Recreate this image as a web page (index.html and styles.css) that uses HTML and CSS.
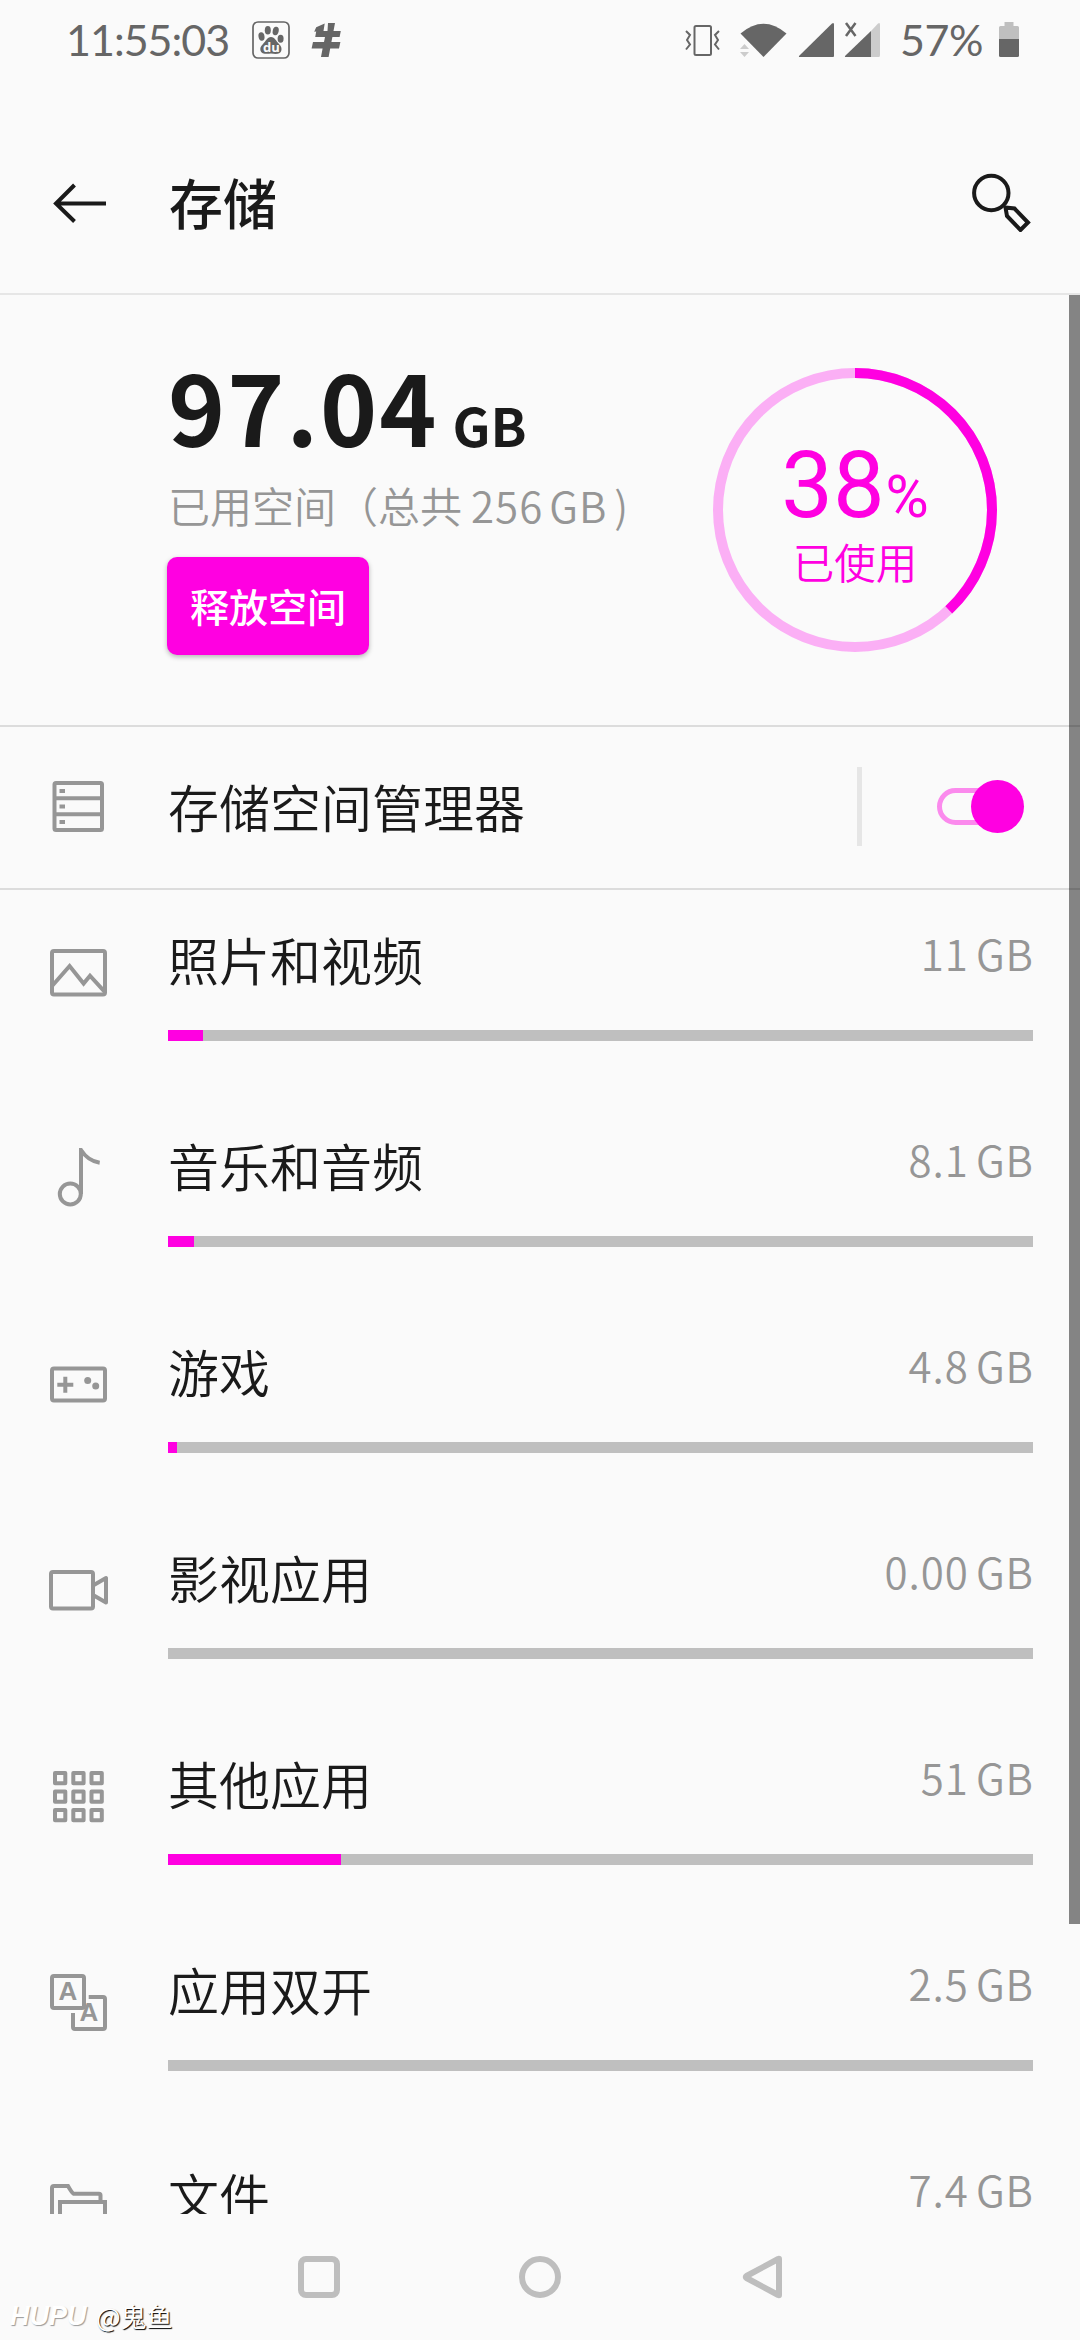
FILE: index.html
```html
<!DOCTYPE html>
<html lang="zh-CN">
<head>
<meta charset="utf-8">
<title>存储</title>
<link rel="stylesheet" href="styles.css">
</head>
<body>
<div class="screen">
  <header class="status">
    <span class="clock">11:55:03</span>
    <svg class="status-notes" width="96" height="80" viewBox="248 0 96 80">
      <rect x="253" y="22" width="36" height="36" rx="5" fill="none" stroke="#666" stroke-width="1.7"/>
      <g fill="#666">
        <ellipse cx="261.5" cy="36.5" rx="3" ry="4.2" transform="rotate(-10 261.5 36.5)"/>
        <ellipse cx="267.8" cy="30.3" rx="3" ry="4.3"/>
        <ellipse cx="275.7" cy="31" rx="3" ry="4.3" transform="rotate(12 275.7 31)"/>
        <ellipse cx="280.6" cy="38.8" rx="3" ry="4"/>
        <path d="M271 37c4 0 5 4 8 7 2.500 2.500 3 4.500 2.200 7-1 3-4 3.300-10.200 2.600-6 .7-9.500 0-10.400-2.600-.8-2.600 0-4.800 2.400-7 3-3 4-7 8-7z"/>
        <path d="M328 23h7l-1.500 8h7.300l-1.200 6h-7.200l-1 5h9l-1.400 6.500h-8.800l-1.600 8.500h-7.600l1.600-8.500h-11l1.400-6.500h11l1-5h-9.800l1-5.500-2 .2 2-4.500 8.500-3.700-1.200 7.500h4z"/>
      </g>
      <text class="du" x="263" y="51.500">du</text>
    </svg>
    <svg class="status-signal" width="216" height="80" viewBox="680 0 216 80">
      <g fill="none" stroke="#666" stroke-width="2">
        <rect x="694.500" y="26" width="16.500" height="29" rx="1.500"/>
        <path d="M686 31l4 4-3 5 3 4.500-4 5M719 31l-4 4 3 5-3 4.500 4 5"/>
      </g>
      <path d="M740.500 33.500Q763.500 14 786.500 33.500L763.500 57z" fill="#666"/>
      <path d="M740 49l4.500-5 4.500 5zM740 52h9l-4.500 5z" fill="#ccc"/>
      <path d="M832 23.500q2-1.500 2 1V56q0 1-1 1h-33q-2 0-.5-1.500z" fill="#666"/>
      <path d="M878 23.500q2-1.500 2 1V55q0 2-1 2h-8V31z" fill="#ccc"/>
      <path d="M871 31v26h-25q-2 0-.5-1.500z" fill="#666"/>
      <path d="M846 23l9.500 13M855.500 23l-9.500 13" stroke="#666" stroke-width="2.500"/>
    </svg>
    <span class="battery-text">57%</span>
    <svg class="status-battery" width="20" height="80" viewBox="995 0 20 80">
      <path d="M1000.500 22h9v4h4q1.500 0 1.500 1.500V39h-20V27.500q0-1.500 1.500-1.500h4z" fill="#bfbfbf"/>
      <path d="M995 39h20v16.500q0 1.500-1.500 1.500h-17q-1.500 0-1.500-1.500z" fill="#666"/>
    </svg>
  </header>

  <div class="appbar">
    <svg class="back" width="60" height="60" viewBox="48 172 60 60" fill="none" stroke="#1a1a1a" stroke-width="4"><path d="M74.500 185L56 203.500l18.500 18M56 203.500h50"/></svg>
    <h1 class="title">存储</h1>
    <svg class="search" width="62" height="62" viewBox="970 170 62 62" fill="none" stroke="#1a1a1a" stroke-width="4"><circle cx="991.300" cy="193" r="17.200"/><path d="M1005.500 207.500l9 1 13.500 14-7.500 7.500-13.500-14z"/></svg>
  </div>

  <main class="content">
    <section class="summary">
      <div class="usage">
        <div class="amount"><span class="number">97.04</span><span class="unit">GB</span></div>
        <div class="caption">已用空间（总共<span class="total">256</span><span class="gb">GB</span><span class="paren">)</span></div>
        <button class="free">释放空间</button>
      </div>
      <div class="ring">
        <svg class="ring-art" width="284" height="284" viewBox="0 0 284 284" fill="none" stroke-width="10">
          <circle cx="142" cy="142" r="137" stroke="#fbaff5"/>
          <circle cx="142" cy="142" r="137" stroke="#ff00e1" pathLength="100" stroke-dasharray="38 62" transform="rotate(-90 142 142)"/>
        </svg>
        <div class="percent">38<small>%</small></div>
        <div class="used">已使用</div>
      </div>
    </section>

    <section class="manager">
      <svg class="icon" width="60" height="60" viewBox="48 777 60 60"><rect x="54.500" y="783" width="47.500" height="47" rx="1.500"/><path d="M54 798.300h48M54 814.300h48"/><path class="solid" d="M59.500 789h5.500v4h-5.500zM59.500 804.500h5.500v4h-5.500zM59.500 820h5.500v4h-5.500z"/></svg>
      <span class="label">存储空间管理器</span>
      <span class="split"></span>
      <span class="toggle"><i class="knob"></i></span>
    </section>

    <section class="list">
      <div class="row">
        <svg class="icon" width="60" height="60" viewBox="0 0 60 60"><rect x="4" y="9" width="53" height="43.500" rx="2"/><path d="M4.500 43.500L21.600 24l14 17.500L42 33.700l15 16.500"/></svg>
        <span class="label">照片和视频</span><span class="size">11<b>GB</b></span>
        <div class="bar"><div class="fill" style="width:35px"></div></div>
      </div>
      <div class="row">
        <svg class="icon" width="60" height="60" viewBox="0 0 60 60"><circle cx="22.300" cy="46" r="10.500"/><path d="M33 46V2q7 11 18.700 12.700"/></svg>
        <span class="label">音乐和音频</span><span class="size">8.1<b>GB</b></span>
        <div class="bar"><div class="fill" style="width:26px"></div></div>
      </div>
      <div class="row">
        <svg class="icon" width="60" height="60" viewBox="0 0 60 60"><rect x="4" y="14.500" width="53" height="32" rx="2"/><path d="M9.300 30.700h16M17.300 22.700v16"/><circle class="solid" cx="39.700" cy="26.500" r="3.500"/><circle class="solid" cx="47.700" cy="32" r="3.500"/></svg>
        <span class="label">游戏</span><span class="size">4.8<b>GB</b></span>
        <div class="bar"><div class="fill" style="width:9px"></div></div>
      </div>
      <div class="row">
        <svg class="icon" width="60" height="60" viewBox="0 0 60 60"><rect x="3" y="12" width="42" height="36.500" rx="2"/><path d="M45 25.500L58 18v24.500L45 35" stroke-linejoin="round"/></svg>
        <span class="label">影视应用</span><span class="size">0.00<b>GB</b></span>
        <div class="bar"></div>
      </div>
      <div class="row">
        <svg class="icon" width="60" height="60" viewBox="0 0 60 60" stroke-linejoin="round"><path d="M7 7h10.300v10.300H7zM25.300 7h10.300v10.300H25.300zM43.500 7h10.300v10.300H43.500zM7 25.500h10.300v10.300H7zM25.300 25.500h10.300v10.300H25.300zM43.500 25.500h10.300v10.300H43.500zM7 44h10.300v10.300H7zM25.300 44h10.300v10.300H25.300zM43.500 44h10.300v10.300H43.500z"/></svg>
        <span class="label">其他应用</span><span class="size">51<b>GB</b></span>
        <div class="bar"><div class="fill" style="width:173px"></div></div>
      </div>
      <div class="row">
        <svg class="icon" width="60" height="60" viewBox="0 0 60 60"><rect x="4" y="4" width="32" height="32" rx="2"/><path d="M40.700 25H55q2 0 2 2v28q0 2-2 2H27q-2 0-2-2V41"/><text x="20" y="28">A</text><text x="41" y="49">A</text></svg>
        <span class="label">应用双开</span><span class="size">2.5<b>GB</b></span>
        <div class="bar"></div>
      </div>
      <div class="row">
        <svg class="icon" width="60" height="60" viewBox="0 0 60 60"><path d="M4 60V10q0-2 2-2h14q4 7 5.500 7.700H51q1.500 0 1.500 1.500V24M12 60V24h45v36"/></svg>
        <span class="label">文件</span><span class="size">7.4<b>GB</b></span>
        <div class="bar"></div>
      </div>
    </section>
    <div class="scrollbar"></div>
  </main>

  <nav class="nav">
    <svg width="44" height="44" viewBox="0 0 44 44"><rect x="4" y="4" width="36" height="36" rx="5"/></svg>
    <svg width="44" height="44" viewBox="0 0 44 44"><circle cx="22" cy="22" r="18"/></svg>
    <svg width="44" height="44" viewBox="-2 0 44 44"><path d="M38 4v36q0 .5-.8 0L5.500 23q-1.500-1 0-2L37.200 4q.8-.5.800 0z" stroke-linejoin="round"/></svg>
  </nav>
  <div class="watermark"><em>HUPU</em><span>@鬼鱼</span></div>
</div>
</body>
</html>
```
FILE: styles.css
```css
* { box-sizing: border-box; }
body { margin: 0; background: #fafafa; }
.screen {
  position: relative; width: 1080px; height: 2340px; overflow: hidden;
  display: flex; flex-direction: column;
  background: #fafafa; color: #1a1a1a;
  font-family: "Noto Sans CJK SC", "Noto Sans", sans-serif; font-weight: 350;
}
svg { display: block; flex: none; }

.status { height: 80px; display: flex; align-items: center; color: #666; font-family: Lato, sans-serif; font-size: 43px; font-weight: 400; line-height: 80px; }
.clock { width: 182px; margin-left: 66px; white-space: nowrap; letter-spacing: -1px; }
.du { font: bold 13px "Open Sans", sans-serif; fill: #fafafa; }
.status-signal { margin-left: 336px; }
.battery-text { width: 94px; margin-left: 4px; letter-spacing: -.5px; }
.status-battery { margin-left: 5px; }

.appbar { height: 215px; padding: 31px 48px 0; display: flex; align-items: center; border-bottom: 2px solid #e6e6e6; }
.title { margin: 0 0 0 61px; flex: 1; font-size: 54px; line-height: 80px; font-weight: 500; }
.search { margin-top: -2px; }

.content { position: relative; height: 1919px; overflow: hidden; flex: none; }
.summary { height: 432px; display: flex; border-bottom: 2px solid #dcdcdc; }
.usage { width: 545px; margin-left: 168px; padding-top: 50px; }
.amount { height: 124px; line-height: 120px; display: flex; align-items: baseline; font-weight: 700; }
.number { font-size: 97px; letter-spacing: 2px; }
.unit { font-size: 53px; margin-left: 14px; font-weight: 600; }
.caption { height: 60px; margin-top: 6px; font-size: 42px; line-height: 60px; color: #969696; white-space: nowrap; }
.total { margin-left: 9px; letter-spacing: 1px; }
.gb { margin-left: 6px; letter-spacing: 1px; }
.paren { margin-left: 7px; }
.free {
  display: block; width: 202px; height: 98px; margin: 22px 0 0 -1px; padding: 0 0 2px; border: 0; border-radius: 10px;
  background: #ff00e1; color: #fff; font: 500 39px/96px "Noto Sans CJK SC", sans-serif;
  box-shadow: 0 2px 5px rgba(0,0,0,.28);
}
.ring { position: relative; width: 284px; height: 284px; margin-top: 73px; padding-top: 64px; text-align: center; color: #ff00e1; }
.ring-art { position: absolute; inset: 0; }
.percent { height: 99px; line-height: 108px; font-family: Roboto, sans-serif; font-weight: 400; font-size: 92px; }
.percent small { font-size: 59px; margin-left: 1px; }
.used { height: 60px; font-size: 41.5px; line-height: 60px; }

.manager { height: 163px; display: flex; align-items: center; padding: 0 0 2px 48px; border-bottom: 2px solid #dcdcdc; }
.icon { fill: none; stroke: #969696; stroke-width: 4; }
.icon .solid { fill: #969696; stroke: none; }
.icon text { font: bold 26px "Liberation Sans", sans-serif; fill: #969696; stroke: none; text-anchor: middle; }
.manager .label { margin: -2px 0 0 60px; width: 689px; }
.label { font-size: 51px; line-height: 74px; white-space: nowrap; }
.split { width: 5px; height: 79px; background: #e6e6e6; }
.toggle { position: relative; width: 80px; height: 37px; margin-left: 75px; border: 5px solid #fb8aed; border-radius: 19px; }
.knob { position: absolute; left: 29px; top: -13px; width: 53px; height: 53px; border-radius: 50%; background: #ff00e1; }

.row { height: 206px; display: grid; grid-template-columns: 60px 1fr auto; grid-template-rows: 140px 11px; column-gap: 60px; padding: 0 47px 0 48px; }
.row .icon { margin-top: 52px; grid-row: span 2; }
.row .label { padding-top: 32px; }
.size { padding-top: 32px; height: 100px; font-size: 42px; line-height: 62px; letter-spacing: 1px; margin-right: -1px; color: #969696; }
.size b { font-weight: inherit; margin-left: 7px; }
.bar { grid-column: 2 / 4; height: 11px; background: #bfbfbf; }
.fill { height: 11px; background: #ff00e1; }
.scrollbar { position: absolute; top: 0; right: 0; width: 11px; height: 1629px; background: rgba(0,0,0,.47); }

.nav { height: 126px; display: flex; justify-content: center; align-items: center; gap: 177px; fill: none; stroke: #bebebe; stroke-width: 6; }
.watermark { position: absolute; left: 10px; top: 2298px; display: flex; gap: 7px; font-size: 26px; line-height: 36px; color: #fff; font-weight: 400; text-shadow: 1px 1px 1px #000; }
.watermark em { width: 79px; font: italic bold 27px/36px "Liberation Sans", sans-serif; text-shadow: 1px 1px 1px #999; }
```
